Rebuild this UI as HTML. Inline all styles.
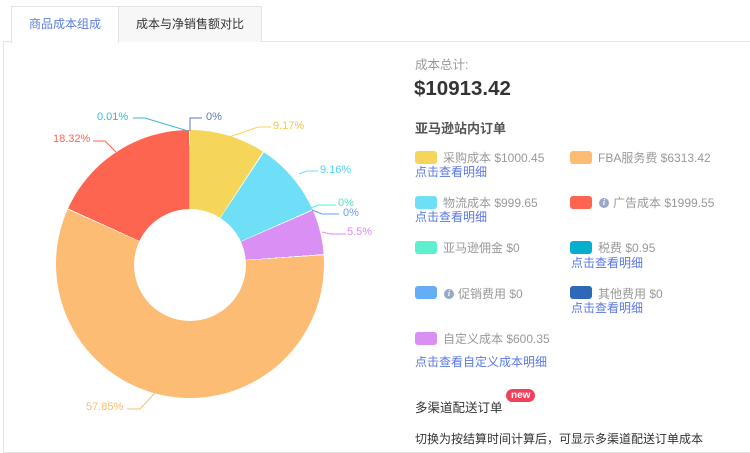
<!DOCTYPE html>
<html><head><meta charset="utf-8"><style>
*{margin:0;padding:0;box-sizing:border-box}
body{width:750px;height:451px;overflow:hidden;background:#fff;font-family:"Liberation Sans","Noto Sans CJK SC",sans-serif;position:relative}
.abs{position:absolute;white-space:nowrap}
.tab{position:absolute;top:6px;height:36px;border:1px solid #e4e4e4;border-bottom:none;font-size:12px;line-height:34px;text-align:center}
.sw{position:absolute;width:22px;height:13px;border-radius:3px}
.t{position:absolute;font-size:12px;color:#999;white-space:nowrap;line-height:14px}
.lk{position:absolute;font-size:12px;color:#5a78e0;white-space:nowrap;line-height:14px}
.i{display:inline-block;width:10px;height:10px;border-radius:50%;background:#9aa8c8;color:#fff;font-size:8px;line-height:10px;text-align:center;font-style:italic;font-weight:bold;vertical-align:2px;margin-right:4px;font-family:"Liberation Serif",serif}
</style></head><body>
<div style="position:absolute;left:3px;top:41px;right:0;bottom:-2px;border:1px solid #e4e4e4;border-right:none"></div>
<div class="tab" style="left:11px;width:108px;background:#fff;color:#5b7fd9;height:37px">商品成本组成</div>
<div class="tab" style="left:118px;width:144px;background:#f7f7f7;color:#333">成本与净销售额对比</div>

<div style="position:absolute;left:56px;top:130px;width:268px;height:268px;border-radius:50%;background:conic-gradient(#f5d55a 0 9.17%,#fff 9.17% 9.3%,#6fdff8 9.3% 18.33%,#fff 18.33% 18.45%,#d98ff3 18.45% 23.83%,#fff 23.83% 23.95%,#fcbc74 23.95% 81.68%,#fff 81.68% 81.8%,#fe6550 81.8% 99.9%,#fff 99.9% 100%)"></div>
<div style="position:absolute;left:134px;top:209px;width:112px;height:112px;border-radius:50%;background:#fff"></div>

<svg class="abs" style="left:0;top:0" width="400" height="451" fill="none" stroke-width="1">
<polyline points="190,131 190,118 202,118" stroke="#5b7bbd"/>
<polyline points="133,118 145,118 188,131" stroke="#3ab7d6"/>
<polyline points="229,137 258,127 271,127" stroke="#f5d55a"/>
<polyline points="93,141 105,141 116,152" stroke="#fe6550"/>
<polyline points="299,174 307,171 318,171" stroke="#6fdff8"/>
<polyline points="311,208 318,205 336,205" stroke="#5cf0cc"/>
<polyline points="312,210 322,214 339,214" stroke="#6a9ef0"/>
<polyline points="322,232 330,234 346,234" stroke="#d98ff3"/>
<polyline points="166,381 140,409 127,409" stroke="#fcbc74"/>
</svg>
<div class="abs" style="left:206px;top:111px;font-size:11px;color:#5b7bbd">0%</div>
<div class="abs" style="left:97px;top:111px;font-size:11px;color:#3ab7d6">0.01%</div>
<div class="abs" style="left:273px;top:120px;font-size:11px;color:#f0c94a">9.17%</div>
<div class="abs" style="left:53px;top:133px;font-size:11px;color:#fe6550">18.32%</div>
<div class="abs" style="left:320px;top:164px;font-size:11px;color:#4fd2f0">9.16%</div>
<div class="abs" style="left:338px;top:197px;font-size:11px;color:#4fe8c0">0%</div>
<div class="abs" style="left:343px;top:207px;font-size:11px;color:#6a9ef0">0%</div>
<div class="abs" style="left:347px;top:226px;font-size:11px;color:#d98ff3">5.5%</div>
<div class="abs" style="left:86px;top:401px;font-size:11px;color:#fcbc74">57.85%</div>

<div class="abs" style="left:415px;top:54px;font-size:12.5px;color:#999">成本总计:</div>
<div class="abs" style="left:414px;top:77px;font-size:20.5px;font-weight:bold;color:#333">$10913.42</div>
<div class="abs" style="left:415px;top:118px;font-size:13px;font-weight:bold;color:#555">亚马逊站内订单</div>

<div class="sw" style="left:415px;top:151px;background:#f5d55a"></div><div class="t" style="left:443px;top:151px">采购成本 $1000.45</div><div class="lk" style="left:415px;top:165px">点击查看明细</div>
<div class="sw" style="left:570px;top:151px;background:#fcbc74"></div><div class="t" style="left:598px;top:151px">FBA服务费 $6313.42</div>

<div class="sw" style="left:415px;top:196px;background:#6fdff8"></div><div class="t" style="left:443px;top:196px">物流成本 $999.65</div><div class="lk" style="left:415px;top:210px">点击查看明细</div>
<div class="sw" style="left:570px;top:196px;background:#fe6550"></div><div class="t" style="left:599px;top:196px"><span class="i">i</span>广告成本 $1999.55</div>

<div class="sw" style="left:415px;top:241px;background:#5cf0cc"></div><div class="t" style="left:443px;top:241px">亚马逊佣金 $0</div>
<div class="sw" style="left:570px;top:241px;background:#06b0cc"></div><div class="t" style="left:598px;top:241px">税费 $0.95</div><div class="lk" style="left:571px;top:256px">点击查看明细</div>

<div class="sw" style="left:415px;top:286px;background:#64aef5"></div><div class="t" style="left:444px;top:287px"><span class="i">i</span>促销费用 $0</div>
<div class="sw" style="left:570px;top:286px;background:#3068b8"></div><div class="t" style="left:598px;top:287px">其他费用 $0</div><div class="lk" style="left:571px;top:301px">点击查看明细</div>

<div class="sw" style="left:415px;top:332px;background:#d98ff3"></div><div class="t" style="left:443px;top:332px">自定义成本 $600.35</div>
<div class="lk" style="left:415px;top:355px">点击查看自定义成本明细</div>

<div class="abs" style="left:415px;top:397px;font-size:12.5px;color:#333">多渠道配送订单</div>
<div class="abs" style="left:506px;top:389px;background:#f0405c;color:#fff;font-size:10px;line-height:13px;padding:0 5px;border-radius:7px;font-weight:bold">new</div>
<div class="abs" style="left:415px;top:430px;font-size:12px;color:#333">切换为按结算时间计算后，可显示多渠道配送订单成本</div>
</body></html>
